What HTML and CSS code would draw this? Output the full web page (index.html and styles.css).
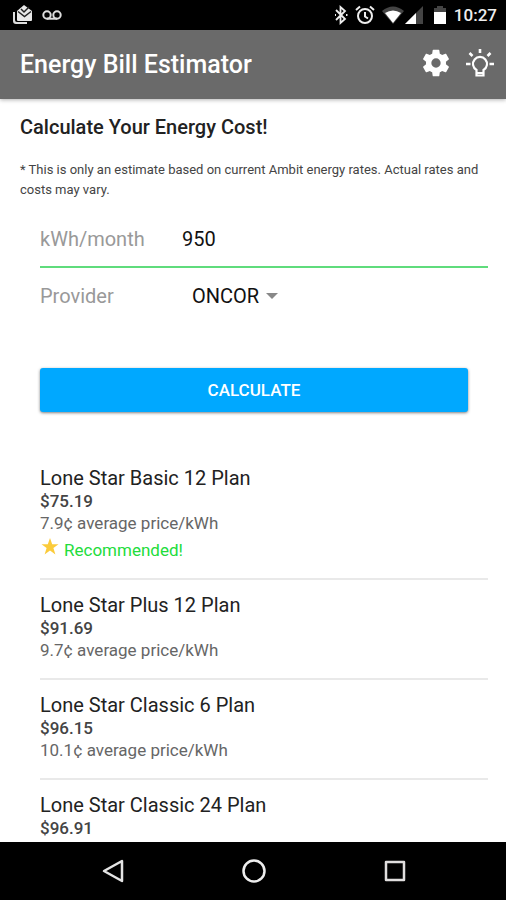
FILE: index.html
```html
<!DOCTYPE html>
<html lang="en">
<head>
<meta charset="utf-8">
<meta name="viewport" content="width=device-width, initial-scale=1">
<title>Energy Bill Estimator</title>
<link rel="stylesheet" href="styles.css">
</head>
<body>
<div class="status">
  <div class="status-group">
    <svg width="20" height="20" viewBox="0 0 20 20" aria-hidden="true"><path d="M0 7v9q0 3 3 3h11v-2H4q-2 0-2-2V7z" fill="#ddd"/><path d="M4 6l7-6 8 6v9q0 1-1 1H5q-1 0-1-1z" fill="#e8e8e8"/><path d="M5 6.500l6.500 5L18 6.500M8 4l3 3 5-5" fill="none" stroke="#222" stroke-width="1.500"/></svg>
    <svg width="20" height="12" viewBox="0 0 20 12" fill="none" stroke="#ddd" stroke-width="2" aria-hidden="true"><circle cx="5" cy="6" r="3.700"/><circle cx="15" cy="6" r="3.700"/><path d="M5 9.700h10"/></svg>
  </div>
  <div class="status-group status-right">
    <svg width="14" height="20" viewBox="0 0 14 20" fill="none" stroke="#eee" stroke-width="1.800" aria-hidden="true"><path d="M2 5l9 9-4.500 4V2L11 6l-9 9"/><path d="M1 10h1M12 10h1.500" stroke-width="2"/></svg>
    <svg width="20" height="20" viewBox="0 0 20 20" fill="none" stroke="#eee" stroke-width="2" aria-hidden="true"><circle cx="10" cy="11" r="7"/><path d="M1 5l4-3.500M19 5l-4-3.500M10 7v4.500l3 2"/></svg>
    <svg width="22" height="18" viewBox="0 0 22 18" aria-hidden="true"><path d="M0 5q11-9 22 0L11 18z" fill="#444"/><path d="M3 7q8-5 16 0l-8 10z" fill="#fff"/></svg>
    <svg class="signal" width="18" height="18" viewBox="0 0 18 18" aria-hidden="true"><path d="M0 18L18 0v18z" fill="#444"/><path d="M0 18L11 7v11z" fill="#fff"/></svg>
    <svg class="battery" width="14" height="20" viewBox="0 0 14 20" aria-hidden="true"><path d="M1 3h3V1h6v2h3v4H1z" fill="#444"/><path d="M1 7h12v12H1z" fill="#fff"/></svg>
    <span class="clock">10:27</span>
  </div>
</div>
<header class="appbar">
  <h1>Energy Bill Estimator</h1>
  <button class="icon-button" type="button" aria-label="Settings">
    <svg width="32" height="32" viewBox="0 0 24 24" fill="#fff" aria-hidden="true"><path d="M19.430 12.980c.04-.32.07-.64.07-.98s-.03-.66-.07-.98l2.110-1.650c.19-.15.24-.42.120-.64l-2-3.460c-.12-.22-.39-.3-.61-.22l-2.490 1c-.52-.4-1.080-.73-1.690-.98l-.38-2.650C14.460 2.180 14.250 2 14 2h-4c-.25 0-.46.18-.49.420l-.38 2.650c-.61.25-1.170.59-1.690.98l-2.490-1c-.23-.09-.49 0-.61.22l-2 3.460c-.13.22-.07.49.12.640l2.110 1.650c-.04.32-.07.65-.07.980s.03.66.07.980l-2.110 1.650c-.19.15-.24.42-.12.640l2 3.460c.12.22.39.3.61.220l2.490-1c.52.4 1.080.73 1.690.980l.38 2.650c.03.24.24.42.49.420h4c.25 0 .46-.18.49-.42l.38-2.650c.61-.25 1.170-.59 1.690-.98l2.490 1c.23.09.49 0 .61-.22l2-3.460c.12-.22.07-.49-.12-.64zM12 15.500a3.500 3.500 0 1 1 0-7 3.500 3.500 0 0 1 0 7z"/></svg>
  </button>
  <button class="icon-button" type="button" aria-label="Energy tips">
    <svg width="32" height="32" viewBox="0 0 32 32" fill="none" stroke="#fff" stroke-width="2.200" aria-hidden="true"><path d="M12.500 28.500v-5.500a7 7 0 1 1 7 0v5.500z"/><path d="M12.500 26h7" stroke-width="2"/><path d="M16 2v4M5.500 6l3 3M26.500 6l-3 3M2 17h4.500M25.500 17H30" stroke-width="2.600"/></svg>
  </button>
</header>
<main class="content">
  <h2>Calculate Your Energy Cost!</h2>
  <p class="note">* This is only an estimate based on current Ambit energy rates. Actual rates and costs may vary.</p>
  <form class="form">
    <div class="field usage">
      <label for="usage">kWh/month</label>
      <input id="usage" type="text" inputmode="numeric" value="950">
    </div>
    <div class="field provider">
      <label for="provider">Provider</label>
      <span class="select-wrap">
        <select id="provider"><option>ONCOR</option></select>
        <svg width="12" height="6" viewBox="0 0 12 6" aria-hidden="true"><path d="M0 0h12L6 6z" fill="#888"/></svg>
      </span>
    </div>
    <button class="calculate" type="button">CALCULATE</button>
  </form>
  <ul class="plans">
    <li>
      <h3>Lone Star Basic 12 Plan</h3>
      <p class="price">$75.19</p>
      <p class="rate">7.9¢ average price/kWh</p>
      <p class="recommended"><svg width="20" height="20" viewBox="0 0 20 20" aria-hidden="true"><path d="M10 1l2.200 6.200h6.300l-5.100 3.900 2 6.400-5.400-3.900-5.400 3.900 2-6.400-5.100-3.900h6.300z" fill="#fbcb3b"/></svg><span>Recommended!</span></p>
    </li>
    <li>
      <h3>Lone Star Plus 12 Plan</h3>
      <p class="price">$91.69</p>
      <p class="rate">9.7¢ average price/kWh</p>
    </li>
    <li>
      <h3>Lone Star Classic 6 Plan</h3>
      <p class="price">$96.15</p>
      <p class="rate">10.1¢ average price/kWh</p>
    </li>
    <li>
      <h3>Lone Star Classic 24 Plan</h3>
      <p class="price">$96.91</p>
    </li>
  </ul>
</main>
<nav class="navbar" aria-label="System">
  <button type="button" aria-label="Back"><svg width="24" height="26" viewBox="0 0 24 26" fill="none" stroke="#e4e4e4" stroke-width="2.500" stroke-linejoin="round" aria-hidden="true"><path d="M21 3v20L3 13z"/></svg></button>
  <button type="button" aria-label="Home"><svg width="26" height="26" viewBox="0 0 26 26" fill="none" stroke="#eee" stroke-width="2.500" aria-hidden="true"><circle cx="13" cy="13" r="10.500"/></svg></button>
  <button type="button" aria-label="Recent apps"><svg width="24" height="24" viewBox="0 0 24 24" fill="none" stroke="#e0dede" stroke-width="2.500" stroke-linejoin="round" aria-hidden="true"><path d="M3 3h18v18H3z"/></svg></button>
</nav>
</body>
</html>
```
FILE: styles.css
```css
* {
  box-sizing: border-box;
}

body {
  margin: 0;
  height: 100vh;
  display: flex;
  flex-direction: column;
  background: #fff;
  color: #222;
  font-family: Roboto, "Liberation Sans", sans-serif;
  overflow: hidden;
}

h1, h2, h3, p, ul {
  margin: 0;
  padding: 0;
}

svg {
  display: block;
  flex: none;
}

button {
  border: 0;
  padding: 0;
  background: none;
  font-family: inherit;
}

.status {
  flex: none;
  height: 30px;
  padding: 0 9px 0 13px;
  display: flex;
  align-items: center;
  justify-content: space-between;
  background: #000;
  color: #eee;
}

.status-group {
  display: flex;
  align-items: center;
  gap: 9px;
}

.status-right {
  gap: 7px;
}

.signal {
  margin-left: -6px;
}

.battery {
  margin-left: 3px;
}

.clock {
  font-size: 17px;
  font-weight: 500;
}

.appbar {
  flex: none;
  height: 69px;
  padding: 0 10px 4px 20px;
  display: flex;
  align-items: center;
  gap: 12px;
  background: #6a6a6a;
  color: #fff;
  box-shadow: 0 1px 4px rgba(0, 0, 0, 0.3);
}

.appbar h1 {
  flex: 1;
  padding-top: 4px;
  font-size: 25px;
  line-height: 28px;
  font-weight: 500;
}

.content {
  flex: 1;
  min-height: 0;
  overflow: hidden;
  padding: 16px 18px 0 20px;
}

h2 {
  font-size: 20px;
  line-height: 24px;
  font-weight: 500;
}

.note {
  margin-top: 21px;
  color: #444;
  font-size: 13px;
  line-height: 20px;
}

.form,
.plans {
  margin-left: 20px;
}

.form {
  margin-top: 12px;
}

.field {
  display: flex;
  align-items: center;
  font-size: 20px;
}

.field label {
  width: 142px;
  color: #999;
}

.field input,
.field select {
  border: 0;
  padding: 0;
  background: transparent;
  color: #111;
  font: inherit;
  outline: 0;
  appearance: none;
}

.field input {
  flex: 1;
  min-width: 0;
}

.usage {
  height: 56px;
  border-bottom: 2px solid #5fdc7c;
}

.provider {
  height: 56px;
}

.select-wrap {
  display: flex;
  align-items: center;
  gap: 6px;
  margin-left: 10px;
}

.calculate {
  display: block;
  width: calc(100% - 20px);
  height: 44px;
  margin-top: 44px;
  border-radius: 3px;
  background: #00a8ff;
  color: #fff;
  font-size: 17px;
  font-weight: 500;
  box-shadow: 0 1px 3px rgba(0, 0, 0, 0.5);
}

.plans {
  margin-top: 41px;
  list-style: none;
}

.plans li {
  padding: 13px 0 17px;
  border-bottom: 2px solid #e9e9e9;
}

h3 {
  font-size: 20px;
  line-height: 24px;
  font-weight: 400;
}

.price,
.rate,
.recommended {
  font-size: 17px;
  line-height: 22px;
}

.price {
  color: #444;
  font-weight: 500;
}

.rate {
  color: #666;
}

.recommended {
  display: flex;
  gap: 4px;
  padding-top: 5px;
  color: #22dc3c;
}

.recommended svg {
  margin-top: -2px;
}

.navbar {
  flex: none;
  height: 58px;
  padding: 0 40px 0 42px;
  display: grid;
  grid-template-columns: repeat(3, 1fr);
  place-items: center;
  background: #000;
}
```
